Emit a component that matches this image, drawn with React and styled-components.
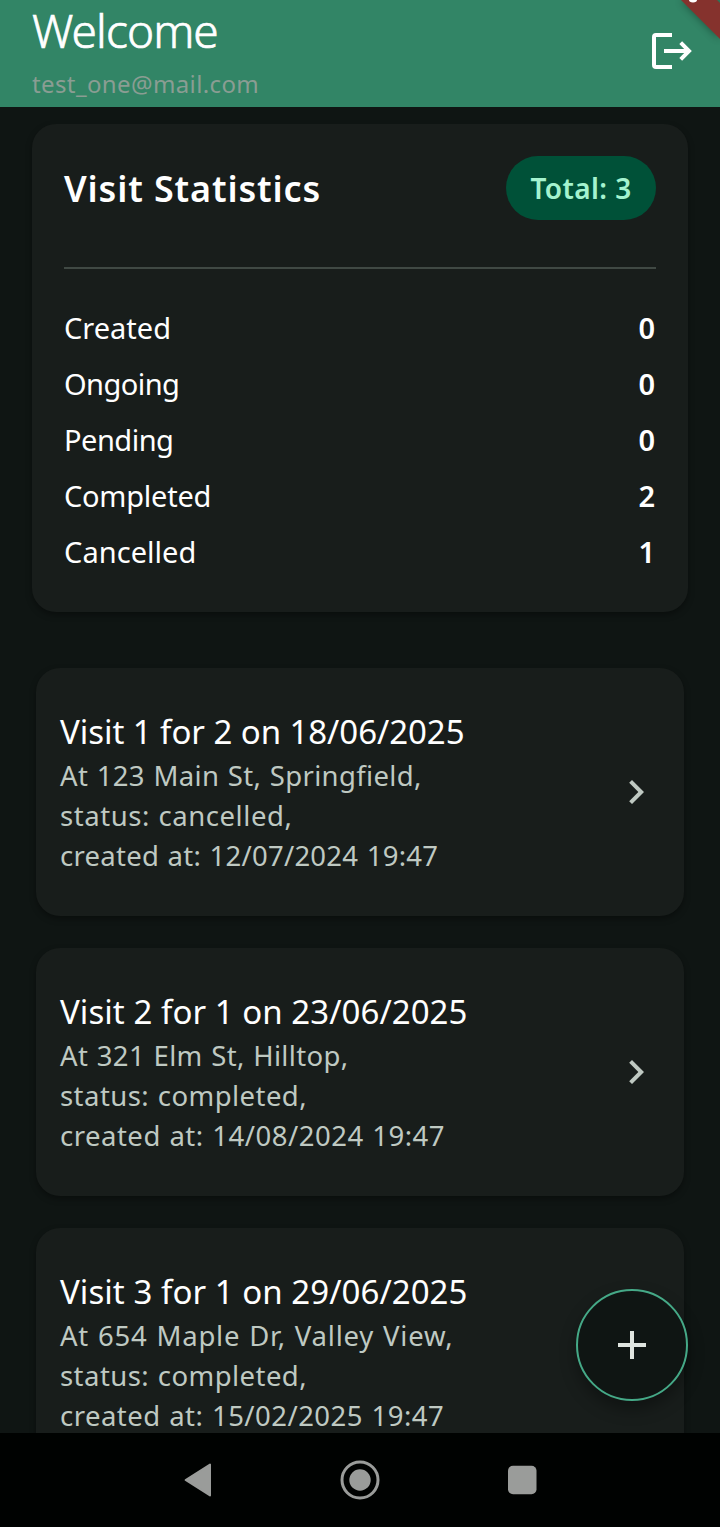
import React from "react";
import styled, { createGlobalStyle } from "styled-components";

const GlobalStyle = createGlobalStyle`
  * { box-sizing: border-box; }
  body { margin: 0; background: #0f1513; }
`;

const Screen = styled.div`
  width: 720px;
  height: 1527px;
  display: flex;
  flex-direction: column;
  overflow: hidden;
  position: relative;
  background: #0f1513;
  color: #fff;
  font-family: "Noto Sans", sans-serif;
`;

const Header = styled.header`
  flex: none;
  height: 107px;
  padding: 0 28px 0 32px;
  display: flex;
  justify-content: space-between;
  background: #328566;
`;

const Greeting = styled.div`
  display: flex;
  flex-direction: column;
`;

const Welcome = styled.h1`
  margin: 0;
  font-size: 46px;
  font-weight: 300;
  line-height: 60px;
  letter-spacing: -0.9px;
  -webkit-text-stroke: 0.7px currentColor;
`;

const Email = styled.span`
  font-size: 24px;
  font-weight: 400;
  line-height: 36px;
  margin-top: 6px;
  letter-spacing: 0.38px;
  color: #8a9d93;
`;

const LogoutButton = styled.button`
  border: 0;
  padding: 33px 0 0;
  background: none;
  color: #fff;
  display: flex;
  align-items: flex-start;
`;

const Ribbon = styled.svg`
  position: absolute;
  top: 0;
  right: 0;
`;

const RibbonShadow = styled.path`
  opacity: 0.4;
  filter: blur(4px);
`;

const Content = styled.main`
  flex: 1;
  min-height: 0;
  overflow: hidden;
  padding: 17px 32px 0;
`;

const Card = styled.section`
  background: #181d1b;
  border-radius: 24px;
  box-shadow: 0 3px 6px rgba(0, 0, 0, 0.35);
`;

const StatsCard = styled(Card)`
  height: 488px;
  padding: 32px;
`;

const StatsHeader = styled.div`
  display: flex;
  align-items: center;
  justify-content: space-between;
  height: 64px;
`;

const StatsTitle = styled.h2`
  margin: 0;
  font-size: 36px;
  font-weight: 600;
  line-height: 48px;
  padding-top: 2px;
  letter-spacing: 0.85px;
`;

const TotalChip = styled.span`
  width: 150px;
  height: 64px;
  padding-bottom: 1px;
  border-radius: 32px;
  display: flex;
  align-items: center;
  justify-content: center;
  background: #005138;
  color: #a4f3cf;
  font-size: 28px;
  font-weight: 600;
  letter-spacing: 0.4px;
`;

const Divider = styled.hr`
  border: 0;
  height: 2px;
  margin: 47px 0 31px;
  background: #404944;
`;

const StatRow = styled.div`
  display: flex;
  align-items: center;
  justify-content: space-between;
  height: 56px;
  line-height: 40px;
  padding-bottom: 1px;
  font-size: 29px;
  letter-spacing: ${(p) => p.$spacing}px;
`;

const StatValue = styled.span`
  font-size: 29px;
  font-weight: 600;
  padding-right: 1px;
  letter-spacing: 0;
`;

const VisitList = styled.div`
  display: flex;
  flex-direction: column;
  gap: 32px;
  margin: 56px 4px 0;
`;

const VisitCard = styled(Card)`
  flex: none;
  height: 248px;
  padding: 40px 24px;
  display: flex;
  align-items: center;
  justify-content: space-between;
`;

const VisitTitle = styled.h3`
  margin: 0;
  font-size: 33px;
  font-weight: 400;
  line-height: 48px;
  white-space: nowrap;
  letter-spacing: ${(p) => p.$spacing}px;
`;

const VisitLine = styled.p`
  margin: 0;
  font-size: 27.5px;
  font-weight: 400;
  line-height: 40px;
  white-space: nowrap;
  color: #bfc9c2;
  word-spacing: 1px;
  letter-spacing: ${(p) => p.$spacing}px;
`;

const AddButton = styled.button`
  position: absolute;
  right: 32px;
  bottom: 126px;
  width: 112px;
  height: 112px;
  padding: 0;
  border-radius: 50%;
  border: 2px solid #45a987;
  background: #0f1513;
  color: #dfe4df;
  display: flex;
  align-items: center;
  justify-content: center;
  box-shadow: 0 8px 16px rgba(0, 0, 0, 0.35);
`;

const NavBar = styled.nav`
  flex: none;
  height: 94px;
  display: flex;
  align-items: center;
  justify-content: center;
  gap: 122px;
  background: #000201;
  color: #9a9c9a;
  position: relative;
`;

const stats = [
  { label: "Created", value: 0, spacing: 0 },
  { label: "Ongoing", value: 0, spacing: -0.55 },
  { label: "Pending", value: 0, spacing: -0.5 },
  { label: "Completed", value: 2, spacing: -0.25 },
  { label: "Cancelled", value: 1, spacing: 0.05 },
];

const visits = [
  {
    title: { text: "Visit 1 for 2 on 18/06/2025", spacing: -0.06 },
    lines: [
      { text: "At 123 Main St, Springfield,", spacing: 0.35 },
      { text: "status: cancelled,", spacing: 0.55 },
      { text: "created at: 12/07/2024 19:47", spacing: 0.26 },
    ],
  },
  {
    title: { text: "Visit 2 for 1 on 23/06/2025", spacing: 0.05 },
    lines: [
      { text: "At 321 Elm St, Hilltop,", spacing: 0.36 },
      { text: "status: completed,", spacing: 0.45 },
      { text: "created at: 14/08/2024 19:47", spacing: 0.5 },
    ],
  },
  {
    title: { text: "Visit 3 for 1 on 29/06/2025", spacing: 0.05 },
    lines: [
      { text: "At 654 Maple Dr, Valley View,", spacing: 0.78 },
      { text: "status: completed,", spacing: 0.45 },
      { text: "created at: 15/02/2025 19:47", spacing: 0.47 },
    ],
  },
];

const LogoutIcon = () => (
  <svg width="40" height="36" viewBox="0 0 40 36" fill="none" stroke="currentColor" strokeWidth="4">
    <path d="M20 2H4a2 2 0 0 0-2 2v28a2 2 0 0 0 2 2h16" />
    <path d="M12 18h24M28.7 9.7L37 18l-8.3 8.3" />
  </svg>
);

const ChevronIcon = () => (
  <svg width="48" height="48" viewBox="0 0 24 24" fill="#bfc9c2">
    <path d="M10 6L8.59 7.41 13.17 12l-4.58 4.59L10 18l6-6z" />
  </svg>
);

export default function App() {
  return (
    <Screen>
      <GlobalStyle />
      <Header>
        <Greeting>
          <Welcome>Welcome</Welcome>
          <Email>test_one@mail.com</Email>
        </Greeting>
        <LogoutButton aria-label="Log out">
          <LogoutIcon />
        </LogoutButton>
      </Header>
      <Content>
        <StatsCard>
          <StatsHeader>
            <StatsTitle>Visit Statistics</StatsTitle>
            <TotalChip>Total: 3</TotalChip>
          </StatsHeader>
          <Divider />
          {stats.map((s) => (
            <StatRow key={s.label} $spacing={s.spacing}>
              <span>{s.label}</span>
              <StatValue>{s.value}</StatValue>
            </StatRow>
          ))}
        </StatsCard>
        <VisitList>
          {visits.map(({ title, lines }) => (
            <VisitCard key={title.text}>
              <div>
                <VisitTitle $spacing={title.spacing}>{title.text}</VisitTitle>
                {lines.map((line) => (
                  <VisitLine key={line.text} $spacing={line.spacing}>{line.text}</VisitLine>
                ))}
              </div>
              <ChevronIcon />
            </VisitCard>
          ))}
        </VisitList>
      </Content>
      <NavBar>
        <svg width="40" height="40" viewBox="0 0 40 40" fill="currentColor" stroke="currentColor" strokeWidth="2" strokeLinejoin="round">
          <path d="M7.6 20L32 4.5v31z" />
        </svg>
        <svg width="40" height="40" viewBox="0 0 40 40">
          <circle cx="20" cy="20" r="18" fill="none" stroke="currentColor" strokeWidth="3" />
          <circle cx="20" cy="20" r="10.7" fill="currentColor" />
        </svg>
        <svg width="40" height="40" viewBox="0 0 40 40" fill="currentColor">
          <rect x="6" y="5.7" width="28.5" height="28.5" rx="5" />
        </svg>
      </NavBar>
      <AddButton aria-label="Add visit">
        <svg width="28" height="28" viewBox="0 0 28 28" stroke="currentColor" strokeWidth="4">
          <path d="M14 0v28M0 14h28" />
        </svg>
      </AddButton>
      <Ribbon width="60" height="60" viewBox="0 0 60 60">
        <RibbonShadow d="M21 0L60 39V3L57 0z" />
        <path d="M21 0L60 39V3L57 0z" fill="#85322d" />
        <ellipse cx="33" cy="0" rx="4" ry="2.4" fill="#fff" />
      </Ribbon>
    </Screen>
  );
}
